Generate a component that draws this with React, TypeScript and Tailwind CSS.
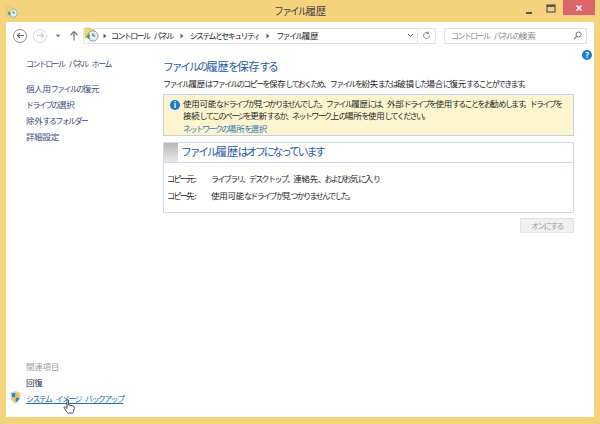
const font = { fontFamily: '"Noto Sans CJK JP", "Liberation Sans", sans-serif' }

// kanji keep nearly full width, kana are squeezed like the UI font in the picture
function T({ s }: { s: string }) {
  return (
    <>
      {s.split(/([\u3400-\u9fff]+)/).map((part, i) =>
        i % 2 === 1 ? (
          <span key={i} className="tracking-[-0.03em]">{part}</span>
        ) : (
          <span key={i} className="text-[0.94em] tracking-[-0.2em]">{part}</span>
        )
      )}
    </>
  )
}

function ClockIcon({ size = 16 }: { size?: number }) {
  return (
    <svg width={size} height={size} viewBox="0 0 16 16">
      <path d="M1 1h6l1 2h3v4H3v5H1z" fill="#f3d77a" stroke="#d6b24e" strokeWidth="0.6" />
      <circle cx="9.5" cy="9.5" r="5.5" fill="#e4eef4" stroke="#7d9aa8" />
      <path d="M9.5 6.5v3h2.5" fill="none" stroke="#44606e" strokeWidth="1" />
      <path d="M2 10l4-3v6z" fill="#3da53a" />
    </svg>
  )
}

function Chevron({ className = '' }: { className?: string }) {
  return (
    <svg width="4" height="6" viewBox="0 0 4 6" className={className}>
      <path d="M0.5 0.5L3.5 3 .5 5.5z" fill="#666" />
    </svg>
  )
}

function SideLink({ s, className = '' }: { s: string; className?: string }) {
  return <div className={`h-4 leading-4 whitespace-nowrap ${className}`}><T s={s} /></div>
}

export default function App() {
  return (
    <div style={font} className="w-[600px] h-[424px] bg-[#f5d27c] flex flex-col px-[6px] pb-[7px] overflow-hidden text-[#1e1e1e] text-[8.5px] [word-spacing:4px]">
      <div className="h-[22px] grid grid-cols-[1fr_auto_1fr] items-center shrink-0">
        <div className="mt-[1px]"><ClockIcon size={12} /></div>
        <div className="text-[10.5px] text-[#444]"><T s="ファイル履歴" /></div>
        <div className="flex items-start justify-end h-full self-start">
          <svg width="10" height="10" viewBox="0 0 10 10" className="mt-[7px] mr-[11px]"><rect x="1" y="5" width="6" height="2" fill="#555" /></svg>
          <svg width="10" height="10" viewBox="0 0 10 10" className="mt-[4px] mr-[7px]"><rect x="1" y="1" width="8" height="7" fill="none" stroke="#555" strokeWidth="1.2" /><rect x="1" y="1" width="8" height="2" fill="#555" /></svg>
          <div className="w-[32px] h-[15px] bg-[#d9656b] flex items-center justify-center mr-[-1px]">
            <svg width="8" height="8" viewBox="0 0 8 8"><path d="M1.5 1.5l5 5M6.5 1.5l-5 5" stroke="#fff" strokeWidth="1.5" /></svg>
          </div>
        </div>
      </div>
      <div className="flex-1 bg-white flex flex-col min-h-0">
        <div className="h-[27px] flex items-center shrink-0">
          <div className="ml-[7px] w-[14px] h-[14px] rounded-full border border-[#8a8a8a] flex items-center justify-center">
            <svg width="9" height="9" viewBox="0 0 9 9"><path d="M8 4.5H1.5M4 2L1.5 4.5 4 7" fill="none" stroke="#666" strokeWidth="1.1" /></svg>
          </div>
          <div className="ml-[6px] w-[14px] h-[14px] rounded-full border border-[#d5d5d5] flex items-center justify-center">
            <svg width="9" height="9" viewBox="0 0 9 9"><path d="M1 4.5h6.5M5 2l2.5 2.5L5 7" fill="none" stroke="#c8c8c8" strokeWidth="1.1" /></svg>
          </div>
          <svg width="6" height="4" viewBox="0 0 6 4" className="ml-[8px]"><path d="M0.5 0.5h5L3 3.5z" fill="#888" /></svg>
          <svg width="10" height="11" viewBox="0 0 10 11" className="ml-[8px]"><path d="M5 10.5V1.5M1.5 5L5 1.5 8.5 5" fill="none" stroke="#777" strokeWidth="1.2" /></svg>
          <div className="ml-[4px] w-[353px] h-[16px] border border-[#e4e4e4] flex items-center">
            <div className="-mt-[2px]"><ClockIcon size={15} /></div>
            <Chevron className="ml-[4px]" />
            <span className="ml-[4px] whitespace-nowrap"><T s="コントロール パネル" /></span>
            <Chevron className="ml-[7px]" />
            <span className="ml-[6px] whitespace-nowrap"><T s="システムとセキュリティ" /></span>
            <Chevron className="ml-[7px]" />
            <span className="ml-[6px] whitespace-nowrap"><T s="ファイル履歴" /></span>
            <div className="flex-1" />
            <svg width="7" height="5" viewBox="0 0 7 5" className="mr-[3px]"><path d="M1 1l2.5 2.5L6 1" fill="none" stroke="#666" strokeWidth="1" /></svg>
            <div className="w-[18px] h-full border-l border-[#e4e4e4] flex items-center justify-center">
              <svg width="9" height="9" viewBox="0 0 9 9"><path d="M7.5 4.5A3 3 0 1 1 6.3 2.1M6.5 0.5v2h-2" fill="none" stroke="#888" strokeWidth="1" /></svg>
            </div>
          </div>
          <div className="ml-[8px] w-[143px] h-[16px] border border-[#e4e4e4] flex items-center pl-[6px] pr-[4px] text-[#8a8a8a]">
            <span className="flex-1 whitespace-nowrap"><T s="コントロール パネルの検索" /></span>
            <svg width="9" height="9" viewBox="0 0 9 9"><circle cx="5.5" cy="3.5" r="2.5" fill="none" stroke="#777" /><path d="M3.7 5.3L1 8" stroke="#777" strokeWidth="1.2" /></svg>
          </div>
        </div>
        <div className="flex-1 flex min-h-0">
          <div className="w-[157px] shrink-0 flex flex-col pl-[20px] pb-[11px] text-[#3b4a78]">
            <SideLink className="mt-[6px]" s="コントロール パネル ホーム" />
            <div className="mt-[9px] flex flex-col">
              <SideLink s="個人用ファイルの復元" />
              <SideLink s="ドライブの選択" />
              <SideLink s="除外するフォルダー" />
              <SideLink s="詳細設定" />
            </div>
            <div className="flex-1" />
            <SideLink className="text-[#a0a0a0]" s="関連項目" />
            <SideLink className="text-[#1e2a50]" s="回復" />
            <div className="relative">
              <SideLink className="text-[#1f6fb5] underline" s="システム イメージ バックアップ" />
              <svg width="11" height="13" viewBox="0 0 11 13" className="absolute left-[-16px] top-[1px]">
                <path d="M5.5 0.5L10 2v4c0 3-2 5-4.5 6C3 11 1 9 1 6V2z" fill="#e8e8e8" stroke="#aaa" strokeWidth="0.5" />
                <path d="M5.5 1.5V6.5H1.8V2.5z" fill="#2a7fd0" />
                <path d="M5.5 6.5H9.2c0 2-1.5 4-3.7 4.8z" fill="#2a7fd0" />
                <path d="M5.5 1.5l3.7 1v4H5.5zM5.5 6.5v4.8C3.3 10.5 1.8 8.5 1.8 6.5z" fill="#f0c830" />
              </svg>
              <svg width="13" height="16" viewBox="0 0 13 16" className="absolute left-[37px] top-[9px]">
                <path d="M4 1.5c0-1 1.6-1 1.6 0V6l4.4.9c1.2.3 1.5 1 1.3 2.1l-.7 3.5c-.2.9-.6 1.5-1.6 1.5H5.5c-.8 0-1.2-.4-1.7-1.1L1.2 9.2c-.6-1 .6-1.8 1.4-1L4 9.5z" fill="#fff" stroke="#222" strokeWidth="0.8" />
              </svg>
            </div>
          </div>
          <div className="flex-1 flex flex-col min-w-0 pr-[20px] relative">
            <div className="absolute right-[2px] top-[1px] w-[10px] h-[10px] rounded-full bg-[#1a7fd0] text-white text-[8px] font-bold flex items-center justify-center leading-none">?</div>
            <div className="text-[11.5px] text-[#2a5aa8] mt-[10px] h-[14px] leading-[14px] whitespace-nowrap"><T s="ファイルの履歴を保存する" /></div>
            <div className="mt-[3px] h-[14px] leading-[14px] whitespace-nowrap"><T s="ファイル履歴はファイルのコピーを保存しておくため、ファイルを紛失または破損した場合に復元することができます。" /></div>
            <div className="mt-[4px] h-[42px] bg-[#fdf5d0] border border-[#c5cfe2] flex pl-[6px] pt-[2px]">
              <div className="w-[10px] h-[10px] mt-[3px] rounded-full bg-[#1a78c8] text-white text-[8px] font-bold flex items-center justify-center leading-none shrink-0">i</div>
              <div className="ml-[3px]">
                <div className="h-[12px] leading-[12px] whitespace-nowrap"><T s="使用可能なドライブが見つかりませんでした。ファイル履歴には、外部ドライブを使用することをお勧めします。ドライブを" /></div>
                <div className="h-[12px] leading-[12px] whitespace-nowrap"><T s="接続してこのページを更新するか、ネットワーク上の場所を使用してください。" /></div>
                <div className="h-[12px] leading-[12px] text-[#1f7ab5] mt-[1px] whitespace-nowrap"><T s="ネットワークの場所を選択" /></div>
              </div>
            </div>
            <div className="mt-[6px] h-[71px] border border-[#d0d8ee] flex flex-col">
              <div className="h-[20px] border-b border-[#d0d8ee] flex items-center">
                <div className="w-[14px] h-full bg-gradient-to-b from-[#b8b8b8] to-[#e8e8e8]" />
                <span className="ml-[3px] -mt-[1px] text-[11.5px] text-[#2a5aa8] whitespace-nowrap"><T s="ファイル履歴はオフになっています" /></span>
              </div>
              <div className="pl-[3px] mt-[8px] flex flex-col gap-[3px]">
                <div className="flex h-[14px] items-center"><span className="w-[44px]"><T s="コピー元:" /></span><span><T s="ライブラリ、デスクトップ、連絡先、およびお気に入り" /></span></div>
                <div className="flex h-[14px] items-center"><span className="w-[44px]"><T s="コピー先:" /></span><span><T s="使用可能なドライブが見つかりませんでした。" /></span></div>
              </div>
            </div>
            <div className="mt-[5px] self-end w-[54px] h-[15px] bg-[#f0f0f0] border border-[#e2e2e2] text-[#9e9e9e] flex items-center justify-center"><T s="オンにする" /></div>
          </div>
        </div>
      </div>
    </div>
  )
}
